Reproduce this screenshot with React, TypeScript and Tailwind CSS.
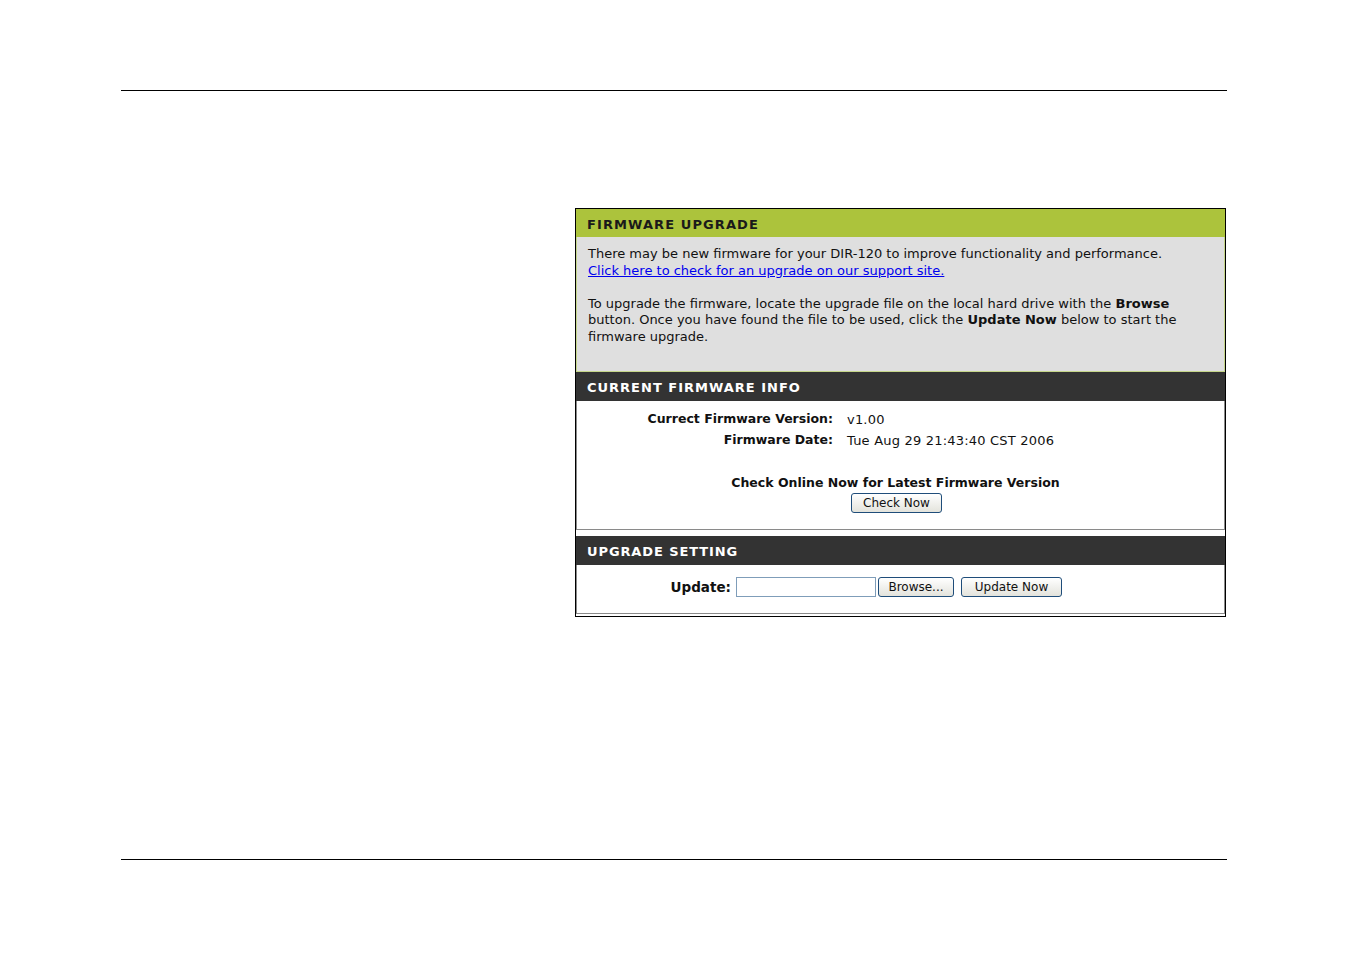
import React from "react";

const dv = { fontFamily: '"DejaVu Sans", Verdana, sans-serif' };

function XpButton({ children, w }: { children: React.ReactNode; w: string }) {
  return (
    <div
      className={`${w} h-[20px] flex items-center justify-center rounded-[3px] border border-[#1f4d7a] bg-gradient-to-b from-white to-[#e3e3dc] text-[12px] leading-none text-[#111]`}
      style={dv}
    >
      {children}
    </div>
  );
}

export default function App() {
  return (
    <div className="w-[1350px] h-[954px] bg-white flex flex-col">
      <div className="mt-[90px] ml-[121px] w-[1106px] h-[1px] bg-black" />
      <div className="mt-[117px] ml-[575px] w-[651px] h-[409px] border border-black flex flex-col bg-white">
        {/* Firmware upgrade */}
        <div
          className="h-[28px] bg-[#acc33c] flex items-center pl-[11px] pt-[3px] text-[13px] font-bold text-[#1a1a1a] tracking-[1.1px]"
          style={dv}
        >
          FIRMWARE UPGRADE
        </div>
        <div
          className="h-[135px] bg-[#dfdfdf] border border-t-0 border-[#c5d68a] pl-[11px] pt-[9px] text-[13px] leading-[16.5px] text-[#111]"
          style={dv}
        >
          <div className="whitespace-nowrap">There may be new firmware for your DIR-120 to improve functionality and performance.</div>
          <div className="whitespace-nowrap">
            <span className="text-[#0000ee] underline">Click here to check for an upgrade on our support site.</span>
          </div>
          <div className="h-[16.5px]" />
          <div className="whitespace-nowrap">
            To upgrade the firmware, locate the upgrade file on the local hard drive with the <b>Browse</b>
            <br />
            button. Once you have found the file to be used, click the <b>Update Now</b> below to start the
            <br />
            firmware upgrade.
          </div>
        </div>
        {/* Current firmware info */}
        <div
          className="h-[29px] bg-[#333333] flex items-center pl-[11px] pt-[2px] text-[13px] font-bold text-white tracking-[1px]"
          style={dv}
        >
          CURRENT FIRMWARE INFO
        </div>
        <div
          className="h-[129px] border border-t-0 border-[#8a8a8a] flex flex-col text-[12.5px] text-[#111]"
          style={dv}
        >
          <div className="mt-[10px] flex flex-col gap-[4px]">
            <div className="flex items-center h-[17px]">
              <div className="w-[256px] text-right font-bold">Currect Firmware Version:</div>
              <div className="pl-[14px] text-[13px] tracking-[0.2px]">v1.00</div>
            </div>
            <div className="flex items-center h-[17px]">
              <div className="w-[256px] text-right font-bold">Firmware Date:</div>
              <div className="pl-[14px] text-[13px] tracking-[0.2px]">Tue Aug 29 21:43:40 CST 2006</div>
            </div>
          </div>
          <div className="mt-[25px] text-center font-bold pr-[10px] leading-[17px]">
            Check Online Now for Latest Firmware Version
          </div>
          <div className="mt-[2px] flex justify-center pr-[8px]">
            <XpButton w="w-[91px]">Check Now</XpButton>
          </div>
        </div>
        <div className="h-[6px]" />
        {/* Upgrade setting */}
        <div
          className="h-[29px] bg-[#333333] flex items-center pl-[11px] pt-[2px] text-[13px] font-bold text-white tracking-[0.9px]"
          style={dv}
        >
          UPGRADE SETTING
        </div>
        <div
          className="h-[49px] border border-t-0 border-[#8a8a8a] flex items-center pb-[4px] text-[12.5px] text-[#111]"
          style={dv}
        >
          <div className="w-[154px] text-right font-bold text-[13.5px]">Update:</div>
          <div className="ml-[5px] w-[140px] h-[20px] border border-[#7f9db9] bg-white" />
          <div className="ml-[2px]">
            <XpButton w="w-[76px]">Browse...</XpButton>
          </div>
          <div className="ml-[7px]">
            <XpButton w="w-[101px]">Update Now</XpButton>
          </div>
        </div>
      </div>
      <div className="mt-[242px] ml-[121px] w-[1106px] h-[1px] bg-black" />
    </div>
  );
}
